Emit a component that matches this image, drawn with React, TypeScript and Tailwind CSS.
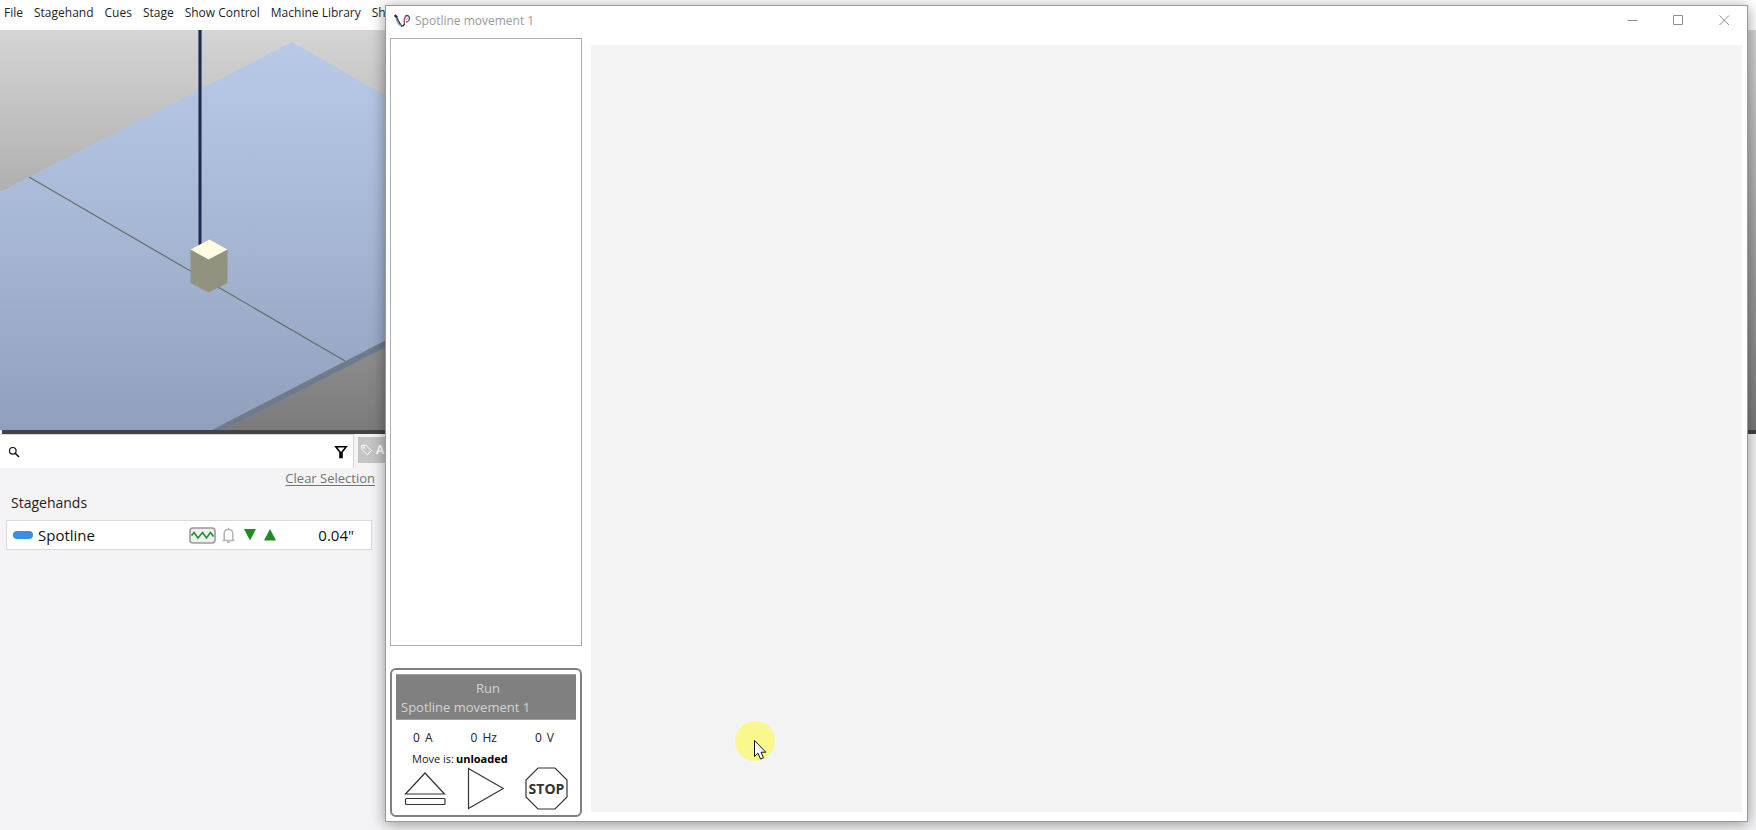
import type { ReactNode } from "react";

const menuItems = ["File", "Stagehand", "Cues", "Stage", "Show Control", "Machine Library", "Show"];

const readings = [
  { value: "0", unit: "A" },
  { value: "0", unit: "Hz" },
  { value: "0", unit: "V" },
];

function MenuBar() {
  return (
    <nav className="flex h-[30px] shrink-0 items-start gap-[11px] bg-white px-1 pt-1 text-[12px] leading-[18px] text-[#1e1e1e]">
      {menuItems.map((item) => (
        <button key={item} type="button" className="whitespace-nowrap">
          {item}
        </button>
      ))}
    </nav>
  );
}

function StageView() {
  return (
    <div className="h-[400px] shrink-0 overflow-hidden bg-linear-to-b from-[#d4d5d4] to-[#7b7b7b]">
      <svg width="400" height="400" viewBox="0 0 400 400" fill="none" aria-label="Stage view">
        <defs>
          <linearGradient id="floor" x1="0" y1="12" x2="0" y2="400" gradientUnits="userSpaceOnUse">
            <stop offset="0" stopColor="#b8cae7" />
            <stop offset="0.5" stopColor="#a6b7d4" />
            <stop offset="1" stopColor="#90a0bc" />
          </linearGradient>
        </defs>
        <path d="M0 162 292 12l108 62v236L224 400H0Z" fill="url(#floor)" />
        <path d="M212 400 400 303v7L224 400Z" fill="#6f7a8c" />
        <path d="M29 147 345 331" stroke="#6b6b6b" strokeWidth="1.2" />
        <path d="M200 0V217" stroke="#7486ab" strokeWidth="4" />
        <path d="M200 0V217" stroke="#1c2a48" strokeWidth="2.4" />
        <path d="M190.500 219.500 209.500 210l18 9.500V253L208.500 262.500 190.500 253Z" fill="#929280" />
        <path d="M190.500 219.500 209.500 209.500l18 10L208.500 229.500Z" fill="#fefddf" />
      </svg>
    </div>
  );
}

function SearchRow() {
  return (
    <div className="flex h-[34px] items-stretch">
      <div className="flex w-[354px] items-center border-t border-r border-[#d6d6d8] bg-white px-2">
        <svg width="12" height="12" viewBox="0 0 12 12" fill="none" stroke="#111" strokeWidth="1.2">
          <circle cx="4.800" cy="4.800" r="3.300" />
          <path d="M7.200 7.200 11 11" strokeWidth="1.600" />
        </svg>
        <input type="text" aria-label="Search stagehands" className="min-w-0 flex-1 px-2 text-sm outline-none" />
        <button type="button" aria-label="Filter" className="-mr-[3px]">
          <svg width="14" height="14" viewBox="0 0 14 14" fill="none" stroke="#000" strokeWidth="1.600">
            <path d="M1.800 1.800H12.200L8 7V12.500H6V7Z" />
            <path d="M7 7v5.500" />
          </svg>
        </button>
      </div>
      <button
        type="button"
        className="mt-[3px] ml-1 flex h-[26px] w-[72px] items-center gap-1 bg-[#c5c5c5] pl-[3px] text-[12px] font-bold text-white"
      >
        <svg width="11" height="12" viewBox="0 0 11 12" fill="none" stroke="#fff" strokeWidth="1">
          <path d="M.7 1.500 4.800 1 10.200 6.600 6.300 10.800.9 5.500Z" />
          <circle cx="3" cy="3.500" r=".8" />
        </svg>
        <span>All</span>
      </button>
    </div>
  );
}

function StagehandRow() {
  return (
    <div className="mx-1.5 flex h-[30px] w-[366px] items-center border border-[#d9d9d9] bg-white pr-[17px] pl-1.5 text-[15px] text-[#111]">
      <span className="h-2 w-5 rounded-full bg-[#3a8ee6]" />
      <span className="ml-[5px] flex-1">Spotline</span>
      <div className="mr-[42px] flex items-center gap-1.5">
        <svg width="27" height="17" viewBox="0 0 27 17" fill="none">
          <rect x="1" y="1" width="25" height="15" rx="3" fill="#efefef" stroke="#9b9b9b" strokeWidth="1.600" />
          <path d="m2.500 8.500 2.500-3 4 5.500 4.500-5.500 4 5.500 4-5.500 3 4" stroke="#1f8f2c" strokeWidth="1.600" />
        </svg>
        <svg width="13" height="17" viewBox="0 0 13 17" fill="none" stroke="#b4b4b4" strokeWidth="1.500">
          <path d="M.5 13.500H12.500M2.200 13.500V6.500C2.200 4 4 2.500 6.500 2.500S10.800 4 10.800 6.500V13.500M6.500 2.500V.8" />
          <path d="M5 15.200h3" strokeWidth="1.600" />
        </svg>
        <div className="ml-[3px] flex gap-2">
          <svg width="12" height="12" viewBox="0 0 12 12" fill="#1e8c22">
            <path d="M0 0h12L6 11.500Z" />
          </svg>
          <svg width="12" height="12" viewBox="0 0 12 12" fill="#1e8c22">
            <path d="M0 11.500h12L6 0Z" />
          </svg>
        </div>
      </div>
      <span>0.04"</span>
    </div>
  );
}

function WindowButton({ label, children }: { label: string; children: ReactNode }) {
  return (
    <button type="button" aria-label={label} className="flex w-[46px] items-center justify-center">
      <svg width="11" height="11" viewBox="0 0 11 11" fill="none" stroke="#8e8e8e">
        {children}
      </svg>
    </button>
  );
}

function TitleBar() {
  return (
    <header className="flex h-8 shrink-0">
      <div className="flex flex-1 items-center gap-[5px] pb-[3px] pl-2 text-[12px] text-[#9a9a9a]">
        <svg width="16" height="14" viewBox="0 0 16 14" fill="none">
          <path d="M.8 1 3 3.500" stroke="#262a3c" strokeWidth="2.400" />
          <path d="M2.500 3 4.500 7.500 7 11.500" stroke="#353c55" strokeWidth="1.600" />
          <path d="M2.200 5 4.500 9.800 7 12" stroke="#8a9abb" strokeWidth="1.300" />
          <path d="M7 12q2.500.5 3.500-2" stroke="#262a3c" strokeWidth="1.400" />
          <path d="M10.500 10Q9.500 5 11.500 2.800" stroke="#b0406f" strokeWidth="1.400" />
          <path d="M11 2.500q2-1.800 3.600-.3t.2 4.300q-1 1.500-2.800 1.500" stroke="#5a4660" strokeWidth="1.300" />
          <path d="M12 6q1-2 2.300-1.500" stroke="#b99ab0" strokeWidth="1" />
        </svg>
        <h1>Spotline movement 1</h1>
      </div>
      <div className="flex pb-1">
        <WindowButton label="Minimize">
          <path d="M.5 5.500h10" />
        </WindowButton>
        <WindowButton label="Maximize">
          <path d="M.5.500h9v9h-9Z" />
        </WindowButton>
        <WindowButton label="Close">
          <path d="m.5.500 9.500 9.500M10 .5.500 10" />
        </WindowButton>
      </div>
    </header>
  );
}

function RunPanel() {
  return (
    <section className="h-[149px] shrink-0 rounded-md border-2 border-[#808080] bg-white px-1 pt-1">
      <div className="h-[46px] border-y border-[#a0a0a0] bg-[#808080] px-[5px] pt-1 text-[13px] leading-[19px] text-[#d3d3d3]">
        <p className="pl-1 text-center">Run</p>
        <p className="whitespace-nowrap">Spotline movement 1</p>
      </div>
      <div className="mt-[9px] flex justify-between pr-[22px] pl-[17px] text-[12px] leading-[18px] text-[#222]">
        {readings.map((reading) => (
          <span key={reading.unit} className="flex gap-[5px]">
            <span>{reading.value}</span>
            <span>{reading.unit}</span>
          </span>
        ))}
      </div>
      <p className="mt-1 flex gap-0.5 pl-4 text-[11px] leading-4 text-[#222]">
        <span>Move is:</span>
        <strong className="font-bold text-black">unloaded</strong>
      </p>
      <div className="flex items-center justify-between px-2">
        <button type="button" aria-label="Load">
          <svg width="42" height="43" viewBox="0 0 42 43" fill="none" stroke="#333" strokeWidth="1.200">
            <path d="M1.500 27 21 6l19.500 21Z" />
            <rect x="1.500" y="31.500" width="39.500" height="6" rx="1" />
          </svg>
        </button>
        <button type="button" aria-label="Run">
          <svg width="37" height="43" viewBox="0 0 37 43" fill="none" stroke="#333" strokeWidth="1.200">
            <path d="M1.500 1.500v40L36.300 21.500Z" />
          </svg>
        </button>
        <button type="button" aria-label="Stop">
          <svg width="43" height="43" viewBox="0 0 43 43" fill="none" stroke="#333" strokeWidth="1.200">
            <path d="M13 1h17L42 13v17L30 42H13L1 30V13Z" />
            <text
              x="21.500"
              y="27"
              textAnchor="middle"
              fill="#333"
              stroke="none"
              className="font-['Open_Sans'] text-[14px] font-bold"
            >
              STOP
            </text>
          </svg>
        </button>
      </div>
    </section>
  );
}

function MoveWindow() {
  return (
    <div className="absolute top-[5px] right-2 bottom-2 left-[385px] flex flex-col border border-[#999] bg-white shadow-[0_2px_14px_rgba(0,0,0,0.4)]">
      <TitleBar />
      <div className="flex min-h-0 flex-1 gap-[9px] pr-[5px] pl-1">
        <div className="flex w-48 shrink-0 flex-col gap-[22px] pb-1">
          <div className="min-h-0 flex-1 border border-[#abadb3] bg-white" />
          <RunPanel />
        </div>
        <main className="mt-[7px] mb-[9px] flex-1 bg-[#f4f4f4]" />
      </div>
    </div>
  );
}

function Pointer() {
  return (
    <div className="pointer-events-none absolute top-[721px] left-[735px] size-10 rounded-full bg-[#f8f88f]">
      <svg width="14" height="22" viewBox="0 0 14 22" className="absolute top-[19px] left-[19px]">
        <path
          d="M.5.500V16.500L4 13.200 6.500 19 9.500 17.800 7 12.200H11.800Z"
          fill="#fff"
          stroke="#111"
          strokeWidth="1"
        />
      </svg>
    </div>
  );
}

export default function App() {
  return (
    <div className="relative flex h-screen flex-col overflow-hidden bg-[#f4f4f6] font-['Open_Sans','Noto_Sans',sans-serif]">
      <MenuBar />
      <StageView />
      <div className="ml-0.5 h-1 shrink-0 bg-[#434343]" />
      <aside className="w-[430px]">
        <SearchRow />
        <div className="flex w-[375px] justify-end">
          <a href="#" className="text-[13px] leading-[21px] text-[#737373] underline underline-offset-2">
            Clear Selection
          </a>
        </div>
        <h2 className="mt-1 mb-[7px] pl-[11px] text-[14px] leading-5 text-[#222]">Stagehands</h2>
        <StagehandRow />
      </aside>
      <MoveWindow />
      <Pointer />
    </div>
  );
}
